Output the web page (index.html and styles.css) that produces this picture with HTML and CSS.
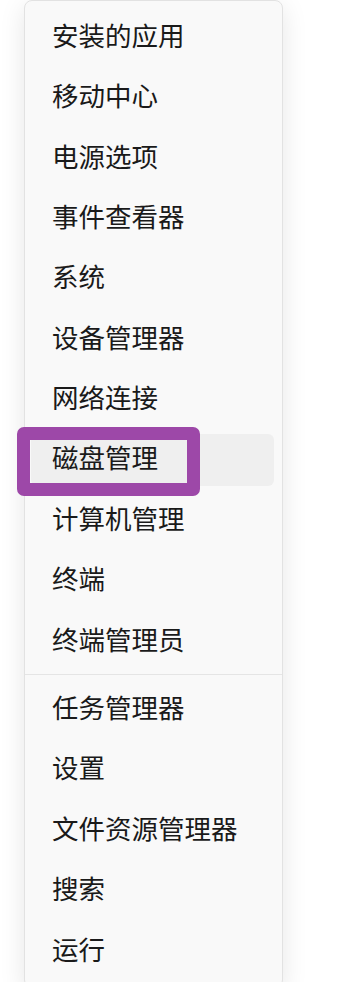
FILE: index.html
```html
<!DOCTYPE html>
<html lang="zh-CN">
<head>
<meta charset="utf-8">
<title>菜单</title>
<link rel="stylesheet" href="styles.css">
</head>
<body>
<div class="menu">
  <div class="item">安装的应用</div>
  <div class="item">移动中心</div>
  <div class="item">电源选项</div>
  <div class="item">事件查看器</div>
  <div class="item">系统</div>
  <div class="item">设备管理器</div>
  <div class="item">网络连接</div>
  <div class="item item-hover">磁盘管理<span class="mark"></span></div>
  <div class="item">计算机管理</div>
  <div class="item">终端</div>
  <div class="item">终端管理员</div>
  <div class="sep"></div>
  <div class="item">任务管理器</div>
  <div class="item">设置</div>
  <div class="item">文件资源管理器</div>
  <div class="item">搜索</div>
  <div class="item">运行</div>
</div>
</body>
</html>
```
FILE: styles.css
```css
html, body {
  margin: 0;
  padding: 0;
  background: #ffffff;
  overflow: hidden;
}
body {
  font-family: "Noto Sans CJK SC", "Noto Sans", sans-serif;
  color: #1a1a1a;
}
.menu {
  margin-left: 24px;
  width: 259px;
  box-sizing: border-box;
  border: 1px solid #e2e2e2;
  border-radius: 8px;
  background: #f9f9f9;
  box-shadow: 0 6px 26px rgba(0, 0, 0, 0.10);
  padding: 10px 0 10px;
  display: flex;
  flex-direction: column;
  gap: 8.4px;
}
.item {
  position: relative;
  height: 52px;
  box-sizing: border-box;
  margin: 0 8px 0 6px;
  padding: 0 0 4px 21px;
  display: flex;
  align-items: center;
  font-size: 26.5px;
  line-height: 1;
  border-radius: 6px;
}
.item-hover {
  background: #efefef;
}
.sep {
  height: 1px;
  background: #e5e5e5;
  margin-top: -1.4px;
}
.mark {
  position: absolute;
  left: -14px;
  top: -7px;
  width: 183px;
  height: 69px;
  box-sizing: border-box;
  border: 13px solid #9d48a8;
  border-radius: 7px;
}
```
